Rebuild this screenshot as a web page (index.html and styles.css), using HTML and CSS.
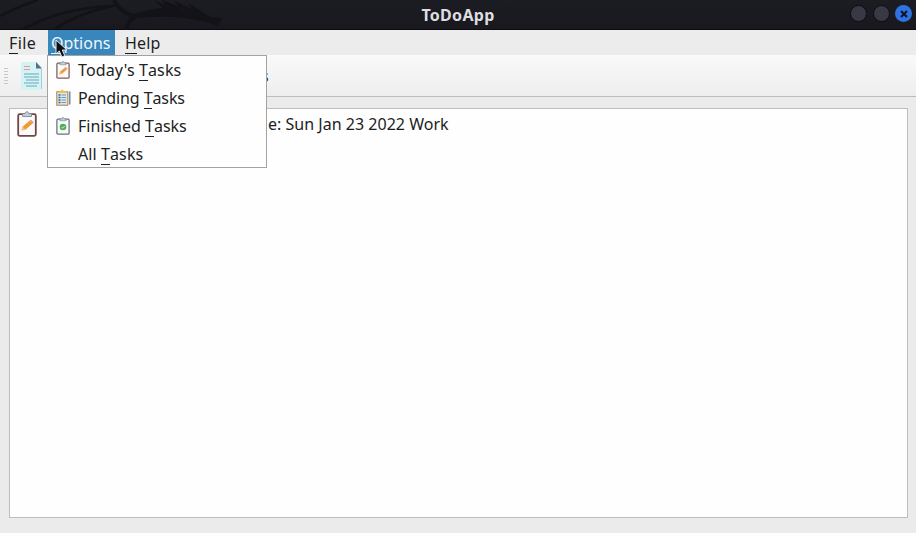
FILE: index.html
```html
<!DOCTYPE html>
<html lang="en">
<head>
<meta charset="utf-8">
<title>ToDoApp</title>
<link rel="stylesheet" href="styles.css">
</head>
<body>
<svg width="0" height="0" class="defs">
  <symbol id="clip" viewBox="0 0 20 26">
    <rect x="1.2" y="3.2" width="17.6" height="21.6" rx="1.5" fill="#fbfafa" stroke="currentColor" stroke-width="1.8"/>
    <path d="M5.500 5.500V2.600H8C8 .2 12 .2 12 2.600h2.500v2.900z" fill="#c3cdd8" stroke="#74808d" stroke-width=".8"/>
  </symbol>
  <symbol id="today" viewBox="0 0 20 26">
    <use href="#clip"/>
    <path d="M4.500 19.500l1.300-4 7-6 2.800 2.900-7 6z" fill="#f39a2b"/>
    <path d="M12.800 9.500l1.200-.8 2.600 2.600-1 1.100z" fill="#d890a0"/>
    <path d="M4.500 19.500l1.300-4 2.800 2.900z" fill="#eec28b"/>
  </symbol>
</svg>
<header class="titlebar">
  <svg class="dragon" width="240" height="30" viewBox="0 0 240 30" fill="none" stroke="#121217">
    <path d="M0 16Q20 6 38 0M23 29Q62 8 112 6M55 29Q78 13 117 5" stroke-width="2.500"/>
    <path d="M114 0Q120 12 133 16Q152 11 184 15M126 30Q128 18 141 14" stroke-width="4"/>
    <path d="M140 13Q160 5 185 10L181 5L192 9L188 3L201 11L210 17L222 18L218 26L207 22L191 19Q170 15 139 18ZM154 0L165 5L162 0L178 6L174 1L190 8L165 10Z" fill="#121217" stroke="none"/>
  </svg>
  <h1>ToDoApp</h1>
  <div class="controls">
    <i></i><i></i>
    <i class="close"><svg width="8" height="8" viewBox="0 0 8 8"><path d="M1 1l6 6M7 1L1 7" stroke="#10182c" stroke-width="2.200"/></svg></i>
  </div>
</header>
<nav class="menubar">
  <span class="entry file"><u>F</u>ile</span>
  <div class="entry options"><span><u>O</u>ptions</span>
    <ul class="menu">
      <li><svg class="ico" width="14" height="18" viewBox="0 0 20 26" color="#805a58"><use href="#today"/></svg><span class="t1">Today's <u>T</u>asks</span></li>
      <li><svg class="ico" width="16" height="18" viewBox="0 0 16 18">
        <rect x="1" y="2" width="12.500" height="15" rx="1" fill="#c9a076"/><rect x="2.500" y="3.500" width="9.500" height="12" fill="#d9e8ef"/>
        <path d="M3.500 6h2M3.500 8.500h2M3.500 11h2M3.500 13.500h2" stroke="#35658b" stroke-width="1.500"/><path d="M6.500 6H11M6.500 8.500H11M6.500 11H11M6.500 13.500H11" stroke="#7399b2"/>
        <path d="M3.500 4V2.200h2.300C6 .4 8.500.4 8.700 2.200H11V4z" fill="#eec450"/><path d="M14.800 2.500v13" stroke="#557f9b" stroke-width="1.300"/>
      </svg><span class="t2">Pending <u>T</u>asks</span></li>
      <li><svg class="ico" width="14" height="18" viewBox="0 0 20 26" color="#65717e"><use href="#clip"/><circle cx="10" cy="14.500" r="4.800" fill="#4fae58"/><path d="M7.800 14.500l1.700 1.700 3-3.200" fill="none" stroke="#d9f2db" stroke-width="1.300"/></svg><span class="t3">Finished <u>T</u>asks</span></li>
      <li><span class="t4">All <u>T</u>asks</span></li>
    </ul>
    <svg class="cursor" width="13" height="20" viewBox="0 0 13 20"><path d="M1 1v14l3.300-3 2.600 6 2.900-1.300L7.300 11H12z" fill="#101010" stroke="#e8eef2"/></svg>
  </div>
  <span class="entry help"><u>H</u>elp</span>
</nav>
<div class="toolbar">
  <i class="grip"></i>
  <svg width="22" height="28" viewBox="0 0 22 28">
    <path d="M0 0h15l6 6.500V28H0z" fill="#d3f3f4"/><path d="M15 0l6 6.500h-6z" fill="#58708a"/><path d="M20.500 7v20" stroke="#9fcfdd"/>
    <path d="M3 4.500h6M3 7.500h6" stroke="#e19a9b" stroke-width="1.200"/><path d="M3 12h15M3 15h15M5 18h13M3 21h15M5 24h11" stroke="#6aa7b6" stroke-width="1.200"/>
  </svg>
  <span class="label">s</span>
</div>
<main class="pane">
  <div class="task">
    <svg width="20" height="26" viewBox="0 0 20 26" color="#6f4744"><use href="#today"/></svg>
    <span>e: Sun Jan 23 2022 Work</span>
  </div>
</main>
</body>
</html>
```
FILE: styles.css
```css
* { box-sizing: border-box; }
body {
  margin: 0;
  width: 916px;
  height: 533px;
  overflow: hidden;
  display: flex;
  flex-direction: column;
  background: #ebebeb;
  color: #1c1c1c;
  font: 16px/28px "Noto Sans", sans-serif;
}
.defs { position: absolute; }
.titlebar {
  position: relative;
  flex: none;
  height: 30px;
  display: flex;
  align-items: center;
  justify-content: center;
  background: linear-gradient(#1c1c23, #18181e);
  border-bottom: 1px solid #0c0c10;
}
.dragon { position: absolute; left: 0; top: 0; }
h1 {
  margin: 0;
  font-size: 16px;
  line-height: 30px;
  font-weight: 700;
  letter-spacing: .3px;
  color: #dedee0;
}
.controls {
  position: absolute;
  right: 4px;
  top: 5px;
  display: flex;
  align-items: center;
  gap: 6px;
}
.controls i {
  width: 17px;
  height: 17px;
  border-radius: 50%;
  background: #383944;
  border: 1px solid #0c0c11;
}
.controls .close {
  width: 17px;
  height: 17px;
  display: grid;
  place-items: center;
  background: #2f72e4;
  border: 0;
}
.controls i:nth-child(2) { margin-right: -1px; }
.menubar {
  flex: none;
  height: 25px;
  display: flex;
  line-height: 26px;
  background: #ececec;
}
u {
  display: inline-block;
  text-decoration: none;
  line-height: 20px;
  border-bottom: 1px solid currentColor;
}
.entry { position: relative; white-space: nowrap; }
.file { width: 48px; padding-left: 9px; letter-spacing: .4px; }
.options { width: 67px; padding-left: 3px; background: #3986bd; color: #eef6fb; }
.help { padding-left: 10px; letter-spacing: .15px; }
.menu {
  position: absolute;
  z-index: 2;
  left: -1px;
  top: 25px;
  width: 220px;
  height: 113px;
  margin: 0;
  padding: 0;
  list-style: none;
  background: #fefefe;
  border: 1px solid #a3a3a3;
  color: #222;
}
.menu li {
  position: relative;
  height: 28px;
  padding-left: 30px;
  line-height: 28px;
}
.t1 { letter-spacing: .12px; }
.t2 { letter-spacing: -.1px; }
.t4 { letter-spacing: .1px; }
.ico { position: absolute; left: 8px; top: 5px; }
li:nth-child(2) .ico { left: 7px; }
.cursor { position: absolute; z-index: 3; left: 7px; top: 9px; }
.toolbar {
  flex: none;
  height: 42px;
  display: flex;
  align-items: center;
  padding-left: 4px;
  gap: 13px;
  background: linear-gradient(#f9f9fa, #eeeeef);
  border-bottom: 1px solid #bcbcbc;
}
.grip {
  width: 4px;
  height: 17px;
  background: radial-gradient(circle, #c8c8c8 35%, transparent 45%) 0 0 / 2px 3px;
}
.label { margin-left: 205px; }
.pane {
  flex: none;
  width: 899px;
  height: 410px;
  margin: 11px 0 0 9px;
  background: #fefefe;
  border: 1px solid #bdbdbd;
}
.task {
  display: flex;
  align-items: center;
  height: 30px;
  padding-left: 7px;
}
.task svg { margin-top: -1px; }
.task span { margin: -1px 0 0 231px; letter-spacing: .02px; white-space: nowrap; }
```
